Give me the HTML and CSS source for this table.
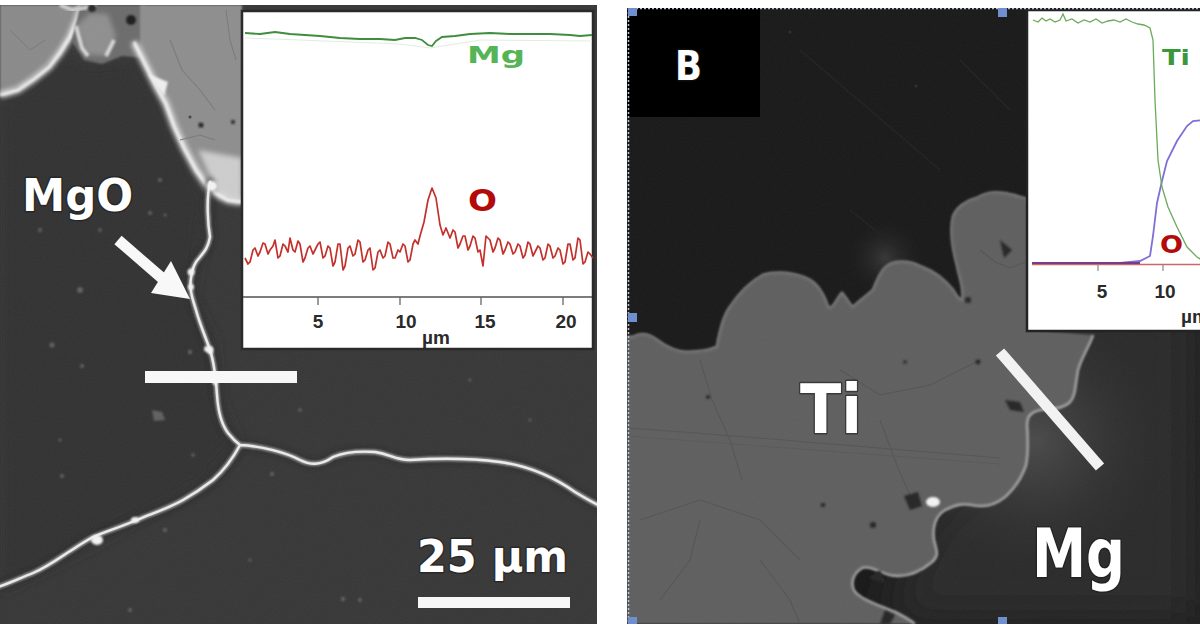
FILE: index.html
```html
<!DOCTYPE html>
<html lang="en">
<head>
<meta charset="utf-8">
<title>SEM micrographs with EDS line scans</title>
<link rel="stylesheet" href="styles.css">
</head>
<body>
<main class="figure">
  <section class="panel panel-a">
    <svg viewBox="0 5 597 619" preserveAspectRatio="none">
      <defs>
        <filter id="bA1" x="-20%" y="-20%" width="140%" height="140%"><feGaussianBlur stdDeviation="1.1"/></filter>
        <filter id="bA2" x="-20%" y="-20%" width="140%" height="140%"><feGaussianBlur stdDeviation="2.4"/></filter>
        <filter id="bA4" x="-20%" y="-20%" width="140%" height="140%"><feGaussianBlur stdDeviation="7"/></filter>
        <filter id="noiseA" x="0" y="0" width="100%" height="100%">
          <feTurbulence type="fractalNoise" baseFrequency="0.8" numOctaves="2" seed="4"/>
          <feColorMatrix type="saturate" values="0"/>
        </filter>
      </defs>
      <rect x="0" y="5" width="597" height="619" fill="#373737"/>
      <path d="M0,96 L20,88 L45,70 L62,52 L80,64 L140,60 L160,95 L185,150 L205,200 L198,260 L190,298 L212,340 L218,400 L238,445 L205,482 L140,516 L90,545 L0,590 Z" fill="#303030" filter="url(#bA4)"/>
      <!-- top-left grain -->
      <path d="M0,5 L86,5 L80,20 L70,38 L58,55 L42,70 L22,86 L0,94 Z" fill="#8a8a8a" filter="url(#bA1)"/>
      <path d="M0,95 L18,90 L34,79 L49,67 L60,53 L70,37 L77,20 L82,5" fill="none" stroke="#e4e4e4" stroke-width="6" filter="url(#bA2)"/>
      <path d="M0,95 L18,90 L34,79 L49,67 L60,53 L70,37 L77,20 L82,5" fill="none" stroke="#f0f0f0" stroke-width="2.5" filter="url(#bA1)"/>
      <path d="M10,30 L30,50 L45,40" fill="none" stroke="#7a7a7a" stroke-width="1"/>
      <!-- small grains at top -->
      <path d="M80,5 L146,5 L146,58 L122,56 L102,64 L84,60 L72,42 Z" fill="#6c6c6c" filter="url(#bA1)"/>
      <path d="M76,26 L90,13 L108,14 L116,36 L106,56 L86,54 Z" fill="#8f8f8f" filter="url(#bA2)"/>
      <path d="M76,26 L82,48 L88,56 M106,56 L114,40" fill="none" stroke="#d6d6d6" stroke-width="4" filter="url(#bA1)"/>
      <path d="M60,5 L72,10 L84,8 L96,5" fill="none" stroke="#cfcfcf" stroke-width="4" filter="url(#bA1)"/>
      <circle cx="131" cy="20" r="5" fill="#1e1e1e" filter="url(#bA1)"/>
      <circle cx="92" cy="8" r="4" fill="#262626" filter="url(#bA1)"/>
      <!-- large light grain -->
      <path d="M140,5 L242,5 L242,203 L226,200 L210,190 L196,170 L184,148 L174,126 L166,104 L156,86 L146,68 L140,50 Z" fill="#8e8e8e" filter="url(#bA1)"/>
      <path d="M198,150 L242,158 L242,202 L220,198 Z" fill="#cdcdcd" filter="url(#bA2)"/>
      <path d="M134,42 L146,66 L156,86 L166,104 L174,126 L184,148 L196,170 L210,190 L228,200 L242,202" fill="none" stroke="#dcdcdc" stroke-width="7" filter="url(#bA2)"/>
      <path d="M134,42 L146,66 L156,86 L166,104 L174,126 L184,148 L196,170 L210,190 L228,200 L242,202" fill="none" stroke="#f2f2f2" stroke-width="2.5" filter="url(#bA1)"/>
      <path d="M148,74 L168,82 L164,96 Z" fill="#f0f0f0" filter="url(#bA1)"/>
      <g fill="none" stroke="#7a7a7a" stroke-width="1.1">
        <path d="M170,40 L182,70 L200,90 L215,110"/>
        <path d="M226,10 L230,40 L236,60"/>
        <path d="M180,140 L200,135 L215,140"/>
      </g>
      <circle cx="201" cy="125" r="2.6" fill="#222" filter="url(#bA1)"/>
      <circle cx="233" cy="122" r="2.2" fill="#333" filter="url(#bA1)"/>
      <circle cx="190" cy="117" r="1.6" fill="#444"/>
      <!-- specks -->
      <g fill="#606060" filter="url(#bA1)">
        <circle cx="52" cy="345" r="2.5"/><circle cx="82" cy="366" r="2"/><circle cx="190" cy="352" r="2.2"/>
        <path d="M152,410 L162,412 L165,420 L154,421 Z"/><circle cx="193" cy="455" r="1.8"/><circle cx="62" cy="476" r="2"/>
        <circle cx="165" cy="530" r="2"/><circle cx="272" cy="474" r="2"/><circle cx="300" cy="410" r="1.8"/>
        <circle cx="343" cy="599" r="2.2"/><circle cx="360" cy="600" r="2"/><circle cx="80" cy="290" r="3"/>
        <circle cx="60" cy="440" r="1.6"/><circle cx="130" cy="610" r="2"/><circle cx="470" cy="380" r="1.6"/>
        <circle cx="530" cy="420" r="1.5"/><circle cx="250" cy="560" r="1.6"/><circle cx="160" cy="180" r="2"/>
        <circle cx="100" cy="230" r="1.8"/><circle cx="40" cy="230" r="2"/><circle cx="150" cy="213" r="2"/>
        <circle cx="165" cy="215" r="1.6"/>
      </g>
      <!-- boundary cracks -->
      <g fill="none" stroke-linecap="round">
        <path d="M210,182 C206,200 208,225 210,237 C208,248 204,252 200,257 C195,262 192,268 191,278 C189,290 193,300 196,310 C200,325 206,338 210,350 C214,362 216,380 217,395 C218,410 222,425 228,433 C232,438 236,442 240,445 M240,445 C260,446 285,452 300,460 C310,465 320,466 333,457 C345,452 360,451 375,452 C390,454 395,460 410,460 C440,458 470,458 500,462 C530,466 555,478 575,492 C585,498 592,502 600,506 M240,445 C232,460 222,472 213,480 C200,490 190,496 183,500 C165,510 150,514 137,520 C120,527 105,532 93,537 C82,543 75,548 67,553 C55,561 45,568 33,573 C20,578 10,583 -2,587" stroke="#222" stroke-width="9" opacity="0.55" filter="url(#bA2)"/>
        <path d="M210,182 C206,200 208,225 210,237 C208,248 204,252 200,257 C195,262 192,268 191,278 C189,290 193,300 196,310 C200,325 206,338 210,350 C214,362 216,380 217,395 C218,410 222,425 228,433 C232,438 236,442 240,445 M240,445 C260,446 285,452 300,460 C310,465 320,466 333,457 C345,452 360,451 375,452 C390,454 395,460 410,460 C440,458 470,458 500,462 C530,466 555,478 575,492 C585,498 592,502 600,506 M240,445 C232,460 222,472 213,480 C200,490 190,496 183,500 C165,510 150,514 137,520 C120,527 105,532 93,537 C82,543 75,548 67,553 C55,561 45,568 33,573 C20,578 10,583 -2,587" stroke="#9c9c9c" stroke-width="5" filter="url(#bA1)"/>
        <path d="M210,182 C206,200 208,225 210,237 C208,248 204,252 200,257 C195,262 192,268 191,278 C189,290 193,300 196,310 C200,325 206,338 210,350 C214,362 216,380 217,395 C218,410 222,425 228,433 C232,438 236,442 240,445 M240,445 C260,446 285,452 300,460 C310,465 320,466 333,457 C345,452 360,451 375,452 C390,454 395,460 410,460 C440,458 470,458 500,462 C530,466 555,478 575,492 C585,498 592,502 600,506 M240,445 C232,460 222,472 213,480 C200,490 190,496 183,500 C165,510 150,514 137,520 C120,527 105,532 93,537 C82,543 75,548 67,553 C55,561 45,568 33,573 C20,578 10,583 -2,587" stroke="#ececec" stroke-width="2.4"/>
      </g>
      <g fill="#f4f4f4" filter="url(#bA1)">
        <ellipse cx="210" cy="350" rx="3.5" ry="4"/><ellipse cx="97" cy="540" rx="6" ry="5"/><ellipse cx="135" cy="520" rx="4" ry="3"/>
        <ellipse cx="191" cy="272" rx="3.5" ry="3.5"/><ellipse cx="191" cy="287" rx="3" ry="3"/><ellipse cx="215" cy="382" rx="2.5" ry="3"/>
        <ellipse cx="212" cy="186" rx="5" ry="5"/><ellipse cx="207" cy="349" rx="3" ry="3"/>
      </g>
      <rect x="0" y="5" width="597" height="619" filter="url(#noiseA)" opacity="0.06"/>

      <!-- arrow -->
      <line x1="118" y1="240" x2="163" y2="279" stroke="#f8f8f8" stroke-width="11"/>
      <polygon points="171,261 151,293 190,299" fill="#f8f8f8"/>
      <text class="t t-white s-mgo" x="22" y="211" textLength="111" lengthAdjust="spacingAndGlyphs">MgO</text>

      <!-- line scan marker -->
      <rect x="145" y="371" width="152" height="12" fill="#f7f7f7"/>

      <!-- scale bar -->
      <text class="t t-white s-scale" x="417" y="572" textLength="151" lengthAdjust="spacingAndGlyphs">25 µm</text>
      <rect x="418" y="597" width="152" height="11" fill="#f7f7f7"/>

      <!-- inset A: EDS line scan -->
      <rect x="242" y="11" width="351" height="338" fill="#ffffff" stroke="#2a2a2a" stroke-width="2.5"/>
      <line x1="243" y1="297" x2="592" y2="297" stroke="#505050" stroke-width="1.5"/>
      <g stroke="#666" stroke-width="1.3">
        <line x1="318" y1="297" x2="318" y2="305"/><line x1="400" y1="297" x2="400" y2="305"/>
        <line x1="481" y1="297" x2="481" y2="305"/><line x1="563" y1="297" x2="563" y2="305"/>
      </g>
      <polyline fill="none" stroke="#e2ece2" stroke-width="1" points="245,38 300,40 400,44 430,48 480,40 592,41"/>
      <polyline fill="none" stroke="#3f8d3f" stroke-width="1.8" points="245,33 260,34 275,32 290,34 305,35 320,36 340,38 360,39 380,39 395,40 405,38 415,38 422,40 428,45 432,46 436,41 442,37 455,36 470,34 490,33 510,34 530,34 550,34 570,35 580,36 592,35"/>
      <polyline fill="none" stroke="#c4302c" stroke-width="1.7" stroke-linejoin="round" points="245,258 248,264 250,262 253,250 255,248 258,256 260,252 263,243 265,244 268,254 270,250 273,246 275,240 278,258 280,256 283,244 285,246 288,252 290,238 293,250 295,252 298,241 300,244 303,262 305,258 308,248 310,246 313,254 315,250 318,244 320,242 323,258 325,256 328,246 330,248 333,266 335,262 338,244 340,244 343,270 345,266 348,248 350,246 353,256 355,254 358,240 360,242 363,262 365,260 368,250 370,248 373,270 375,268 378,252 380,250 383,258 385,256 388,242 390,244 393,258 395,258 398,250 400,252 403,244 405,246 408,262 410,260 413,244 415,240 418,244 420,236 424,222 428,200 432,188 436,198 440,225 443,235 446,228 450,238 453,230 455,232 458,248 460,244 463,236 465,236 468,250 470,246 473,236 475,238 478,252 480,250 483,266 486,236 490,240 493,252 495,248 498,238 500,240 503,254 505,250 508,242 510,244 513,254 515,252 518,244 520,246 523,258 525,255 528,242 530,244 533,256 535,252 538,246 540,248 543,260 545,258 548,244 550,246 553,258 555,256 558,248 560,250 563,264 565,262 568,244 570,244 573,260 575,258 578,238 580,240 583,264 585,262 588,252 590,254 593,258"/>
      <text class="t t-mg s-inset" x="467" y="63" textLength="58" lengthAdjust="spacingAndGlyphs">Mg</text>
      <text class="t t-o s-o" x="468" y="211" textLength="29" lengthAdjust="spacingAndGlyphs">O</text>
      <g class="t-axis">
        <text x="318" y="328">5</text><text x="406" y="328">10</text>
        <text x="485" y="328">15</text><text x="566" y="328">20</text>
        <text x="436" y="344">µm</text>
      </g>
    </svg>
  </section>

  <section class="panel panel-b">
    <svg viewBox="627 8 573 616" preserveAspectRatio="none">
      <defs>
        <filter id="bB1" x="-20%" y="-20%" width="140%" height="140%"><feGaussianBlur stdDeviation="1"/></filter>
        <filter id="bB2" x="-20%" y="-20%" width="140%" height="140%"><feGaussianBlur stdDeviation="2.5"/></filter>
        <filter id="bB20" x="-30%" y="-30%" width="160%" height="160%"><feGaussianBlur stdDeviation="22"/></filter>
        <filter id="noiseB" x="0" y="0" width="100%" height="100%">
          <feTurbulence type="fractalNoise" baseFrequency="0.8" numOctaves="2" seed="9"/>
          <feColorMatrix type="saturate" values="0"/>
        </filter>
        <radialGradient id="glowMg" cx="1035" cy="440" r="150" gradientUnits="userSpaceOnUse">
          <stop offset="0" stop-color="#4a4a4a"/>
          <stop offset="0.5" stop-color="#343434" stop-opacity="0.8"/>
          <stop offset="1" stop-color="#2a2a2a" stop-opacity="0"/>
        </radialGradient>
        <radialGradient id="glowTop" cx="885" cy="258" r="40" gradientUnits="userSpaceOnUse">
          <stop offset="0" stop-color="#363636"/>
          <stop offset="1" stop-color="#1b1b1b" stop-opacity="0"/>
        </radialGradient>
      </defs>
      <rect x="627" y="8" width="573" height="616" fill="#191919"/>
      <path d="M1030,220 L1200,220 L1200,624 L880,624 L930,520 L1030,430 Z" fill="#2a2a2a" filter="url(#bB20)"/>
      <rect x="850" y="280" width="350" height="344" fill="url(#glowMg)"/>
      <rect x="840" y="215" width="90" height="90" fill="url(#glowTop)"/>
      <g stroke="#222" stroke-width="1.2" fill="none">
        <path d="M800,50 L940,170"/><path d="M850,210 L900,250"/><path d="M960,60 L1010,110"/>
      </g>
      <g fill="#2e2e2e"><circle cx="790" cy="32" r="1.5"/><circle cx="916" cy="86" r="1.5"/><circle cx="629" cy="208" r="1.5"/></g>

      <!-- Ti particle -->
      <path d="M627,337 L633,337 C640,333 648,333 657,340 C665,346 675,352 687,352 C697,352 710,350 717,347 C719,335 722,318 730,307 C738,295 748,283 763,275 C775,271 795,272 810,280 C820,286 825,298 828,307 C833,311 838,296 842,293 C848,300 850,306 853,307 C860,300 868,295 873,290 C878,278 882,268 890,264 C900,260 912,262 922,267 C935,272 945,280 953,290 C956,296 960,300 962,300 C965,292 960,280 957,265 C953,250 950,230 953,217 C956,207 968,200 977,198 C985,193 995,192 1003,193 C1012,194 1020,197 1030,200 L1030,330 L1093,335 C1090,345 1082,356 1078,370 C1075,385 1076,395 1070,402 C1062,410 1050,408 1040,410 C1032,412 1027,415 1027,425 C1028,440 1028,455 1026,465 C1022,477 1015,488 1005,497 C995,505 985,508 972,505 C962,503 955,505 945,510 C935,516 932,528 934,540 C936,550 940,555 932,562 C920,572 905,578 890,575 C878,572 870,565 862,568 C852,574 850,585 855,592 C862,600 880,606 895,612 C903,616 910,620 915,624 L627,624 Z" fill="#5f5f5f" filter="url(#bB1)"/>
      <path d="M627,337 L633,337 C640,333 648,333 657,340 C665,346 675,352 687,352 C697,352 710,350 717,347 C719,335 722,318 730,307 C738,295 748,283 763,275 C775,271 795,272 810,280 C820,286 825,298 828,307 C833,311 838,296 842,293 C848,300 850,306 853,307 C860,300 868,295 873,290 C878,278 882,268 890,264 C900,260 912,262 922,267 C935,272 945,280 953,290 C956,296 960,300 962,300 C965,292 960,280 957,265 C953,250 950,230 953,217 C956,207 968,200 977,198 C985,193 995,192 1003,193 C1012,194 1020,197 1030,200" fill="none" stroke="#747474" stroke-width="3" filter="url(#bB1)"/>
      <path d="M1093,335 C1090,345 1082,356 1078,370 C1075,385 1076,395 1070,402 C1062,410 1050,408 1040,410 C1032,412 1027,415 1027,425 C1028,440 1028,455 1026,465 C1022,477 1015,488 1005,497 C995,505 985,508 972,505 C962,503 955,505 945,510 C935,516 932,528 934,540 C936,550 940,555 932,562 C920,572 905,578 890,575 C878,572 870,565 862,568 C852,574 850,585 855,592 C862,600 880,606 895,612 C903,616 910,620 915,624" fill="none" stroke="#a4a4a4" stroke-width="2.6" filter="url(#bB1)"/>
      <g fill="none" stroke="#4c4c4c" stroke-width="1.1" opacity="0.55">
        <path d="M627,428 C720,434 850,446 1000,458"/>
        <path d="M627,436 C720,442 850,452 1000,464" opacity="0.5"/>
        <path d="M700,360 L712,400 L730,440 L742,480"/>
        <path d="M880,420 L898,468 L912,500"/>
        <path d="M840,370 L880,395 L930,385 L980,360"/>
        <path d="M640,520 L700,500 L760,520 L800,560"/>
        <path d="M660,600 L690,560 L700,520"/>
        <path d="M760,560 L790,600 L800,624"/>
        <path d="M980,250 L995,262 L1010,268 L1025,262"/>
      </g>
      <g fill="#262626" filter="url(#bB1)">
        <circle cx="978" cy="362" r="2.5"/><path d="M1005,400 L1020,402 L1024,412 L1010,410 Z"/>
        <circle cx="873" cy="525" r="3"/><circle cx="823" cy="505" r="2.2"/>
        <path d="M904,496 L918,492 L922,506 L910,510 Z"/><circle cx="968" cy="300" r="3"/>
        <circle cx="708" cy="397" r="2"/><circle cx="905" cy="362" r="1.8"/>
        <path d="M868,578 L880,570 L886,584 Z"/><path d="M885,610 L895,615 L890,624 L880,624 Z"/>
        <path d="M1000,240 L1012,250 L1004,258 Z"/>
      </g>
      <ellipse cx="933" cy="502" rx="7" ry="5" fill="#f4f4f4" filter="url(#bB1)"/>
      <rect x="627" y="8" width="573" height="616" filter="url(#noiseB)" opacity="0.05"/>

      <rect x="627" y="8" width="133" height="109" fill="#000000"/>
      <text class="t t-white s-b" x="675" y="80" textLength="27" lengthAdjust="spacingAndGlyphs">B</text>

      <line x1="1000" y1="352" x2="1100" y2="467" stroke="#f2f2f2" stroke-width="11"/>
      <text class="t t-white s-big" x="800" y="433" textLength="62" lengthAdjust="spacingAndGlyphs">Ti</text>
      <text class="t t-white s-big" x="1032" y="577" textLength="93" lengthAdjust="spacingAndGlyphs">Mg</text>

      <!-- inset B: EDS line scan -->
      <rect x="1027" y="10" width="190" height="321" fill="#ffffff" stroke="#232323" stroke-width="2.5"/>
      <g stroke="#888" stroke-width="1.2">
        <line x1="1098" y1="265" x2="1098" y2="271"/><line x1="1163" y1="265" x2="1163" y2="271"/>
      </g>
      <line x1="1032" y1="264.5" x2="1210" y2="264.5" stroke="#c56a6a" stroke-width="1.4"/>
      <polyline fill="none" stroke="#7f6fd6" stroke-width="1.8" points="1032,263 1080,263 1120,263 1140,261 1150,256 1153,236 1157,203 1162,181 1167,161 1177,141 1187,126 1193,121 1205,120"/>
      <line x1="1032" y1="263" x2="1140" y2="263" stroke="#7a3a8a" stroke-width="2.2"/>
      <polyline fill="none" stroke="#6aaa5a" stroke-width="1.3" points="1033,20 1038,22 1042,18 1046,21 1050,19 1055,22 1060,20 1063,14 1066,21 1072,19 1078,23 1084,20 1090,22 1096,19 1102,23 1108,21 1114,20 1120,22 1126,19 1132,22 1138,24 1144,25 1150,28 1153,40 1155,100 1158,160 1162,187 1168,207 1177,227 1187,247 1197,257 1205,262"/>
      <text class="t t-ti s-ti" x="1162" y="65" textLength="28" lengthAdjust="spacingAndGlyphs">Ti</text>
      <text class="t t-o s-ob" x="1160" y="253" textLength="23" lengthAdjust="spacingAndGlyphs">O</text>
      <g class="t-axis">
        <text x="1102" y="298">5</text><text x="1165" y="298">10</text>
      </g>
      <text class="t-axis-start" x="1181" y="323">µm</text>

      <!-- selection frame -->
      <path d="M628,8.5 L1200,8.5 M628.5,8 L628.5,624" fill="none" stroke="#b9c6e2" stroke-width="1.5" stroke-dasharray="2 2"/>
      <g fill="#6f8fcf">
        <rect x="628" y="8" width="9" height="8"/><rect x="998" y="8" width="9" height="9"/>
        <rect x="628" y="313" width="9" height="9"/><rect x="628" y="617" width="9" height="7"/>
        <rect x="998" y="617" width="9" height="7"/>
      </g>
    </svg>
  </section>
</main>
</body>
</html>
```

FILE: styles.css
```css
html, body {
  margin: 0;
  padding: 0;
  background: #ffffff;
}

.figure {
  display: flex;
  align-items: flex-start;
  gap: 30px;
  width: 1200px;
  height: 630px;
  overflow: hidden;
}

.panel {
  flex: none;
  overflow: hidden;
}

.panel-a {
  width: 597px;
  height: 619px;
  margin-top: 5px;
}

.panel-b {
  width: 573px;
  height: 616px;
  margin-top: 8px;
}

.panel svg {
  display: block;
  width: 100%;
  height: 100%;
}

.t {
  font-family: "DejaVu Sans", "Liberation Sans", sans-serif;
  font-weight: 700;
}

.t-white {
  fill: #ffffff;
  stroke: rgba(25, 25, 25, 0.55);
  stroke-width: 3px;
  stroke-linejoin: round;
  paint-order: stroke fill;
}

.t-mg { fill: #55b455; }
.t-o { fill: #b30a0a; }
.t-ti { fill: #3a973a; }

.s-mgo { font-size: 44px; }
.s-scale { font-size: 44px; }
.s-inset { font-size: 23px; }
.s-o { font-size: 30px; }
.s-b { font-size: 40px; }
.s-big { font-size: 68px; }
.s-ti { font-size: 22px; }
.s-ob { font-size: 25px; }

.t-axis text,
.t-axis-start {
  font-family: "Liberation Sans", "DejaVu Sans", sans-serif;
  font-weight: 700;
  font-size: 19px;
  fill: #2a2a2a;
}

.t-axis text {
  text-anchor: middle;
}

.t-axis-start {
  text-anchor: start;
}
```
